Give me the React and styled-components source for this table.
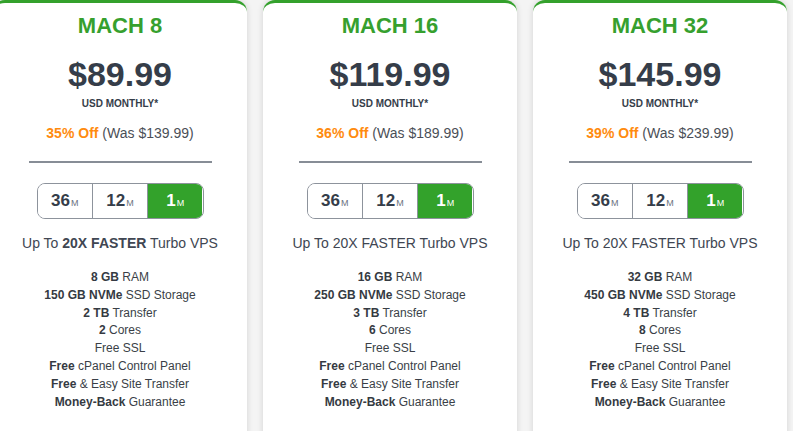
import React from "react";
import styled, { createGlobalStyle } from "styled-components";

const GlobalStyle = createGlobalStyle`
  html, body {
    margin: 0;
    padding: 0;
    height: 431px;
    overflow: hidden;
    background: #f4f4f4;
    font-family: "Liberation Sans", Arial, sans-serif;
  }
`;

const plans = [
  {
    name: "MACH 8",
    price: "$89.99",
    off: "35% Off",
    was: "(Was $139.99)",
    boldFaster: true,
    features: [
      [["8 GB", true], [" RAM"]],
      [["150 GB NVMe", true], [" SSD Storage"]],
      [["2 TB", true], [" Transfer"]],
      [["2", true], [" Cores"]],
      [["Free SSL"]],
      [["Free", true], [" cPanel Control Panel"]],
      [["Free", true], [" & Easy Site Transfer"]],
      [["Money-Back", true], [" Guarantee"]],
    ],
  },
  {
    name: "MACH 16",
    price: "$119.99",
    off: "36% Off",
    was: "(Was $189.99)",
    features: [
      [["16 GB", true], [" RAM"]],
      [["250 GB NVMe", true], [" SSD Storage"]],
      [["3 TB", true], [" Transfer"]],
      [["6", true], [" Cores"]],
      [["Free SSL"]],
      [["Free", true], [" cPanel Control Panel"]],
      [["Free", true], [" & Easy Site Transfer"]],
      [["Money-Back", true], [" Guarantee"]],
    ],
  },
  {
    name: "MACH 32",
    price: "$145.99",
    off: "39% Off",
    was: "(Was $239.99)",
    features: [
      [["32 GB", true], [" RAM"]],
      [["450 GB NVMe", true], [" SSD Storage"]],
      [["4 TB", true], [" Transfer"]],
      [["8", true], [" Cores"]],
      [["Free SSL"]],
      [["Free", true], [" cPanel Control Panel"]],
      [["Free", true], [" & Easy Site Transfer"]],
      [["Money-Back", true], [" Guarantee"]],
    ],
  },
];

const terms = ["36", "12", "1"];

export default function App() {
  return (
    <>
      <GlobalStyle />
      <StyledRow>
        {plans.map((plan) => (
          <StyledCard key={plan.name}>
            <StyledTitle>{plan.name}</StyledTitle>
            <StyledPrice>{plan.price}</StyledPrice>
            <StyledPer>USD MONTHLY*</StyledPer>
            <StyledDiscount>
              <b>{plan.off}</b> {plan.was}
            </StyledDiscount>
            <StyledDivider />
            <StyledToggle>
              {terms.map((t) => (
                <StyledTerm key={t} $active={t === "1"}>
                  {t}
                  <small>M</small>
                </StyledTerm>
              ))}
            </StyledToggle>
            <StyledTagline>
              Up To {plan.boldFaster ? <b>20X FASTER</b> : "20X FASTER"} Turbo VPS
            </StyledTagline>
            <StyledFeatures>
              {plan.features.map((line, i) => (
                <li key={i}>
                  {line.map(([text, bold], j) =>
                    bold ? <b key={j}>{text}</b> : <span key={j}>{text}</span>
                  )}
                </li>
              ))}
            </StyledFeatures>
          </StyledCard>
        ))}
      </StyledRow>
    </>
  );
}

const StyledRow = styled.div`
  display: flex;
  flex-direction: row;
  gap: 16px;
  margin-left: -7px;
  height: 431px;
  overflow: hidden;
`;

const StyledCard = styled.div`
  flex: 0 0 254px;
  height: 470px;
  box-sizing: border-box;
  background: #ffffff;
  border-top: 3px solid #34a12c;
  border-radius: 12px;
  box-shadow: 0 0 6px rgba(0, 0, 0, 0.14);
  display: flex;
  flex-direction: column;
  align-items: center;
  text-align: center;
  padding-top: 9px;
`;

const StyledTitle = styled.div`
  font-size: 22px;
  line-height: 28px;
  font-weight: 700;
  color: #36a02e;
`;

const StyledPrice = styled.div`
  margin-top: 14px;
  font-size: 34px;
  line-height: 40px;
  font-weight: 700;
  color: #353d49;
`;

const StyledPer = styled.div`
  margin-top: 3px;
  font-size: 10px;
  line-height: 14px;
  font-weight: 700;
  color: #353d49;
`;

const StyledDiscount = styled.div`
  margin-top: 13px;
  font-size: 14px;
  line-height: 18px;
  color: #4a4f57;
  & b {
    color: #ff8b0f;
  }
`;

const StyledDivider = styled.div`
  margin-top: 19px;
  width: 183px;
  height: 2px;
  background: #878d96;
`;

const StyledToggle = styled.div`
  margin-top: 20px;
  display: flex;
  flex-direction: row;
  width: 167px;
  height: 36px;
  box-sizing: border-box;
  border: 1.5px solid #8d939c;
  border-radius: 8px;
  overflow: hidden;
`;

const StyledTerm = styled.div`
  flex: 1;
  display: flex;
  align-items: baseline;
  justify-content: center;
  padding-top: 8px;
  box-sizing: border-box;
  font-size: 17px;
  line-height: 18px;
  font-weight: 700;
  color: ${(props) => (props.$active ? "#ffffff" : "#353d49")};
  background: ${(props) => (props.$active ? "#33a22b" : "#ffffff")};
  & + & {
    border-left: 1.5px solid #8d939c;
  }
  & small {
    font-size: 9px;
    font-weight: 400;
    margin-left: 1px;
    color: ${(props) => (props.$active ? "#ffffff" : "#6b7280")};
  }
`;

const StyledTagline = styled.div`
  margin-top: 15px;
  font-size: 14px;
  line-height: 18px;
  color: #404652;
`;

const StyledFeatures = styled.ul`
  list-style: none;
  margin: 17px 0 0;
  padding: 0;
  font-size: 12px;
  line-height: 17.8px;
  color: #3a3f47;
  & b {
    color: #353a42;
  }
`;
